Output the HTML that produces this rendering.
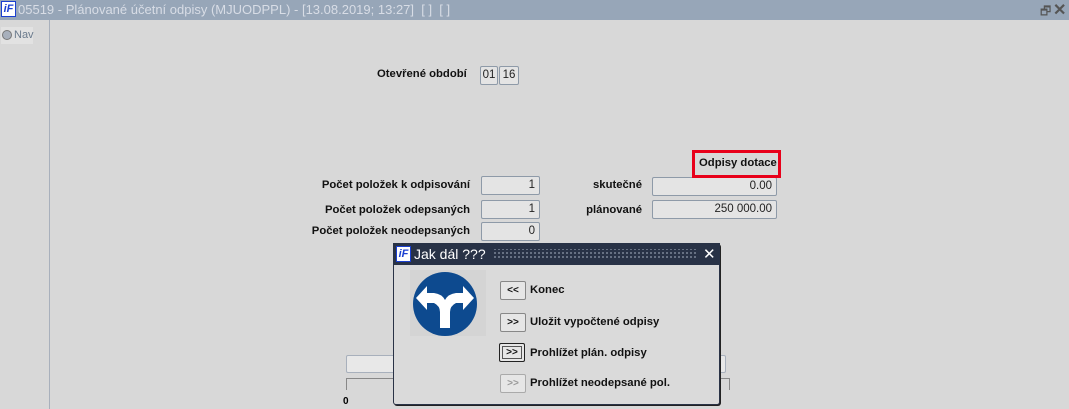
<!DOCTYPE html>
<html><head><meta charset="utf-8"><style>
body{margin:0;width:1069px;height:409px;background:#d8d8d8;position:relative;overflow:hidden;font-family:"Liberation Sans",sans-serif;font-size:11.5px}
.a{position:absolute}
.lbl{position:absolute;font-weight:bold;color:#111;text-align:right;white-space:nowrap;font-size:11.3px}
.fld{position:absolute;background:#e4e4e4;border:1px solid #8e9aa8;border-radius:2px;box-sizing:border-box;text-align:right;padding-right:4px;line-height:16px;color:#222}
.btn{position:absolute;width:26px;height:19px;box-sizing:border-box;border:1px solid #888;background:#e6e6e6;font-weight:bold;font-size:10px;text-align:center;line-height:17px;color:#111;border-radius:2px}
.bt{position:absolute;font-weight:bold;color:#111;left:530px;font-size:11.3px}
</style></head><body>
<div class="a" style="left:0;top:0;width:1069px;height:20px;background:#97a6b8"></div>
<div class="a" style="left:1px;top:1px;width:15px;height:16px;background:#fff;border:1px solid #1a3fd0;box-sizing:border-box;color:#1a3fd0;font-weight:bold;font-style:italic;font-size:11px;line-height:14px;text-align:center">iF</div>
<div class="a" style="left:18px;top:2px;color:#d8dde6;font-size:13px">05519 - Plánované účetní odpisy (MJUODPPL) - [13.08.2019; 13:27]&nbsp; [ ]&nbsp; [ ]</div>
<div class="a" style="left:1040px;top:2px;color:#555;font-size:12px">🗗</div>
<div class="a" style="left:1053px;top:0px;color:#555;font-size:16px;font-weight:bold">✕</div>
<div class="a" style="left:0;top:20px;width:49px;height:389px;background:#d8d8d8;border-right:1px solid #a8b0bc"></div>
<div class="a" style="left:1px;top:27px;width:32px;height:17px;background:#e2e2e2"></div>
<div class="a" style="left:2px;top:30px;width:8px;height:8px;border-radius:50%;background:#a8b0bc;border:1px solid #777"></div>
<div class="a" style="left:14px;top:29px;color:#6a7a8c;font-size:11px">Nav</div>

<div class="lbl" style="left:377px;top:68px">Otevřené období</div>
<div class="fld" style="left:480px;top:66px;width:18px;height:19px;text-align:center;padding:0;line-height:17px">01</div>
<div class="fld" style="left:499px;top:66px;width:20px;height:19px;text-align:center;padding:0;line-height:17px">16</div>

<div class="lbl" style="right:599px;top:179px">Počet položek k odpisování</div>
<div class="lbl" style="right:599px;top:204px">Počet položek odepsaných</div>
<div class="lbl" style="right:599px;top:225px">Počet položek neodepsaných</div>
<div class="fld" style="left:481px;top:176px;width:59px;height:19px">1</div>
<div class="fld" style="left:481px;top:200px;width:59px;height:19px">1</div>
<div class="fld" style="left:481px;top:222px;width:59px;height:19px">0</div>
<div class="lbl" style="right:427px;top:179px">skutečné</div>
<div class="lbl" style="right:427px;top:204px">plánované</div>
<div class="fld" style="left:652px;top:177px;width:125px;height:19px">0.00</div>
<div class="fld" style="left:652px;top:200px;width:125px;height:19px">250 000.00</div>
<div class="a" style="left:692px;top:150px;width:89px;height:28px;border:3px solid #e8001a;box-sizing:border-box"></div>
<div class="lbl" style="left:699px;top:157px">Odpisy dotace</div>

<div class="a" style="left:346px;top:355px;width:380px;height:18px;background:#e8e8e8;border:1px solid #a8b0bc;border-radius:2px;box-sizing:border-box"></div>
<div class="a" style="left:346px;top:378px;width:384px;height:12px;border-top:1px solid #888;border-left:1px solid #888;border-right:1px solid #888;box-sizing:border-box"></div>
<div class="a" style="left:343px;top:396px;font-size:10px;font-weight:bold">0</div>

<div class="a" style="left:393px;top:243px;width:327px;height:162px;background:#dadada;border:1px solid #2a3346;border-radius:3px;box-sizing:border-box;box-shadow:1px 1px 0 #222"></div>
<div class="a" style="left:393px;top:243px;width:327px;height:22px;background:#283246"></div>
<div class="a" style="left:393px;top:243px;width:327px;height:22px;background-image:radial-gradient(#7a8496 0.8px,transparent 1px);background-size:4px 4px;clip-path:inset(6px 24px 6px 100px)"></div>
<div class="a" style="left:396px;top:246px;width:15px;height:16px;background:#fff;border:1px solid #1a3fd0;box-sizing:border-box;color:#1a3fd0;font-weight:bold;font-style:italic;font-size:11px;line-height:14px;text-align:center">iF</div>
<div class="a" style="left:414px;top:246px;color:#fff;font-size:14px">Jak dál ???</div>
<div class="a" style="left:703px;top:245px;color:#fff;font-size:15px">✕</div>

<svg class="a" style="left:410px;top:270px" width="76" height="66" viewBox="0 0 76 66">
<rect width="76" height="66" fill="#d4d4d4"/>
<circle cx="35" cy="34" r="32" fill="#0d4a8f"/>
<path d="M30 58 L30 42 Q30 36 24 33 L17 33 L17 40 L6 28 L17 16 L17 23 L24 23 Q32 24 35 30 Q38 24 46 23 L53 23 L53 16 L64 28 L53 40 L53 33 L46 33 Q40 36 40 42 L40 58 Z" fill="#fff"/>
</svg>

<div class="btn" style="left:500px;top:281px">&lt;&lt;</div><div class="bt" style="top:284px">Konec</div>
<div class="btn" style="left:500px;top:313px">&gt;&gt;</div><div class="bt" style="top:316px">Uložit vypočtené odpisy</div>
<div class="btn" style="left:499px;top:343px;border:1px solid #222;box-shadow:inset 0 0 0 2px #e6e6e6,inset 0 0 0 3px #555;">&gt;&gt;</div><div class="bt" style="top:347px">Prohlížet plán. odpisy</div>
<div class="btn" style="left:500px;top:374px;color:#999;border-color:#aaa">&gt;&gt;</div><div class="bt" style="top:377px">Prohlížet neodepsané pol.</div>
</body></html>
